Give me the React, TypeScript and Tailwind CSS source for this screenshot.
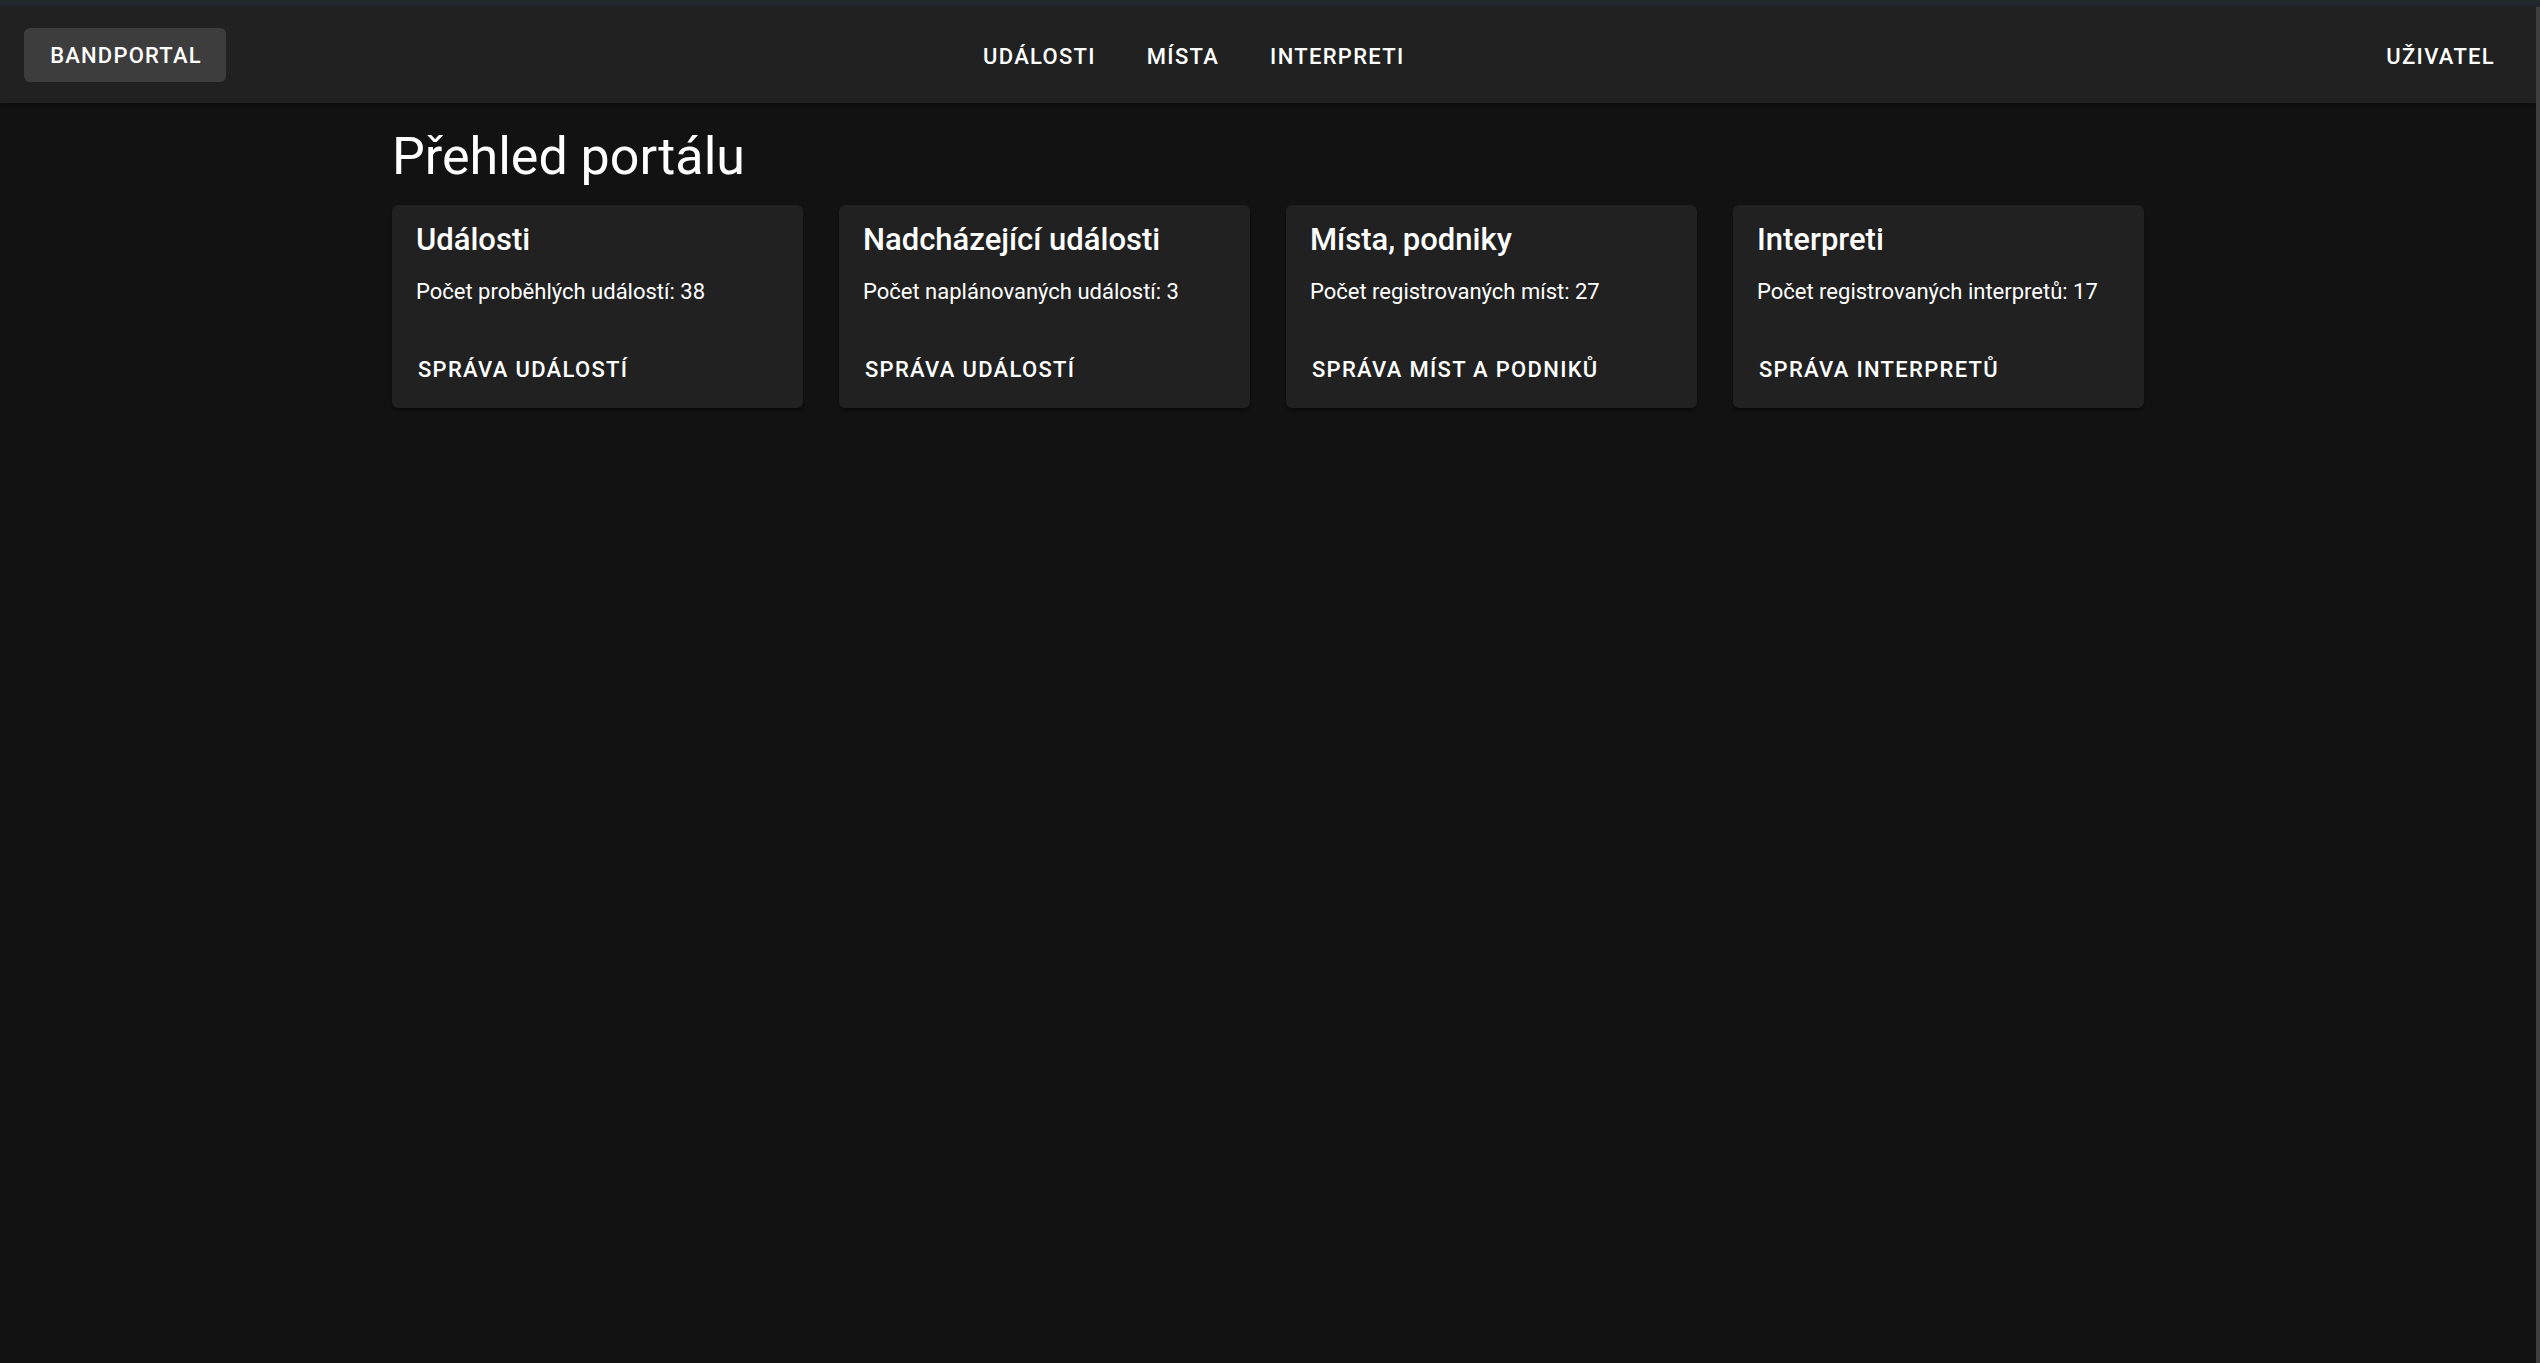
import React from "react"

const font = { fontFamily: "Roboto, 'Noto Sans', sans-serif" }

interface CardItem {
  title: string
  text: string
  action: string
}

const cards: CardItem[] = [
  { title: "Události", text: "Počet proběhlých událostí: 38", action: "Správa událostí" },
  { title: "Nadcházející události", text: "Počet naplánovaných událostí: 3", action: "Správa událostí" },
  { title: "Místa, podniky", text: "Počet registrovaných míst: 27", action: "Správa míst a podniků" },
  { title: "Interpreti", text: "Počet registrovaných interpretů: 17", action: "Správa interpretů" },
]

function NavButton({ label }: { label: string }) {
  return (
    <button className="px-[12px] py-[9px] text-[22px] leading-[36px] font-medium uppercase tracking-[1.3px] text-white">
      {label}
    </button>
  )
}

function PortalCard({ card }: { card: CardItem }) {
  return (
    <div className="flex h-[203px] flex-col rounded-[6px] bg-[#212121] shadow-[0_3px_3px_rgba(0,0,0,0.35)]">
      <div className="px-[24px] pt-[17px]">
        <h2 className="text-[31px] font-medium leading-[36px] text-white">{card.title}</h2>
        <p className="mt-[18px] text-[22px] leading-[32px] text-white">{card.text}</p>
      </div>
      <div className="px-[14px] pt-[35px]">
        <button className="px-[12px] py-[9px] text-[22px] leading-[36px] font-medium uppercase tracking-[1.3px] text-white">
          {card.action}
        </button>
      </div>
    </div>
  )
}

export default function App() {
  return (
    <div className="flex h-[1363px] w-[2540px] flex-col overflow-hidden bg-[#121212]" style={font}>
      <div className="h-[7px] bg-[#22272e]" />
      <div className="flex flex-1">
        <div className="flex flex-1 flex-col">
          <header className="flex h-[96px] items-center bg-[#212121] px-[24px] shadow-[0_2px_4px_rgba(0,0,0,0.4)]">
            <button className="h-[54px] w-[202px] rounded-[6px] bg-[#3d3d3d] pl-[2px] text-[22px] font-medium uppercase tracking-[1.2px] text-white">
              Bandportal
            </button>
            <nav className="ml-[745px] mt-[3px] flex gap-[27px]">
              <NavButton label="Události" />
              <NavButton label="Místa" />
              <NavButton label="Interpreti" />
            </nav>
            <div className="flex-1" />
            <div className="mr-[5px] mt-[3px]">
              <NavButton label="Uživatel" />
            </div>
          </header>
          <main className="mx-auto w-[1800px] px-[24px] pt-[22px]">
            <h1 className="text-[52px] leading-[63px] font-normal text-white">Přehled portálu</h1>
            <div className="mt-[17px] grid grid-cols-4 gap-[36px]">
              {cards.map((card) => (
                <PortalCard key={card.title} card={card} />
              ))}
            </div>
          </main>
        </div>
        <div className="w-[4px] bg-[#3f3f3f]" />
      </div>
    </div>
  )
}
